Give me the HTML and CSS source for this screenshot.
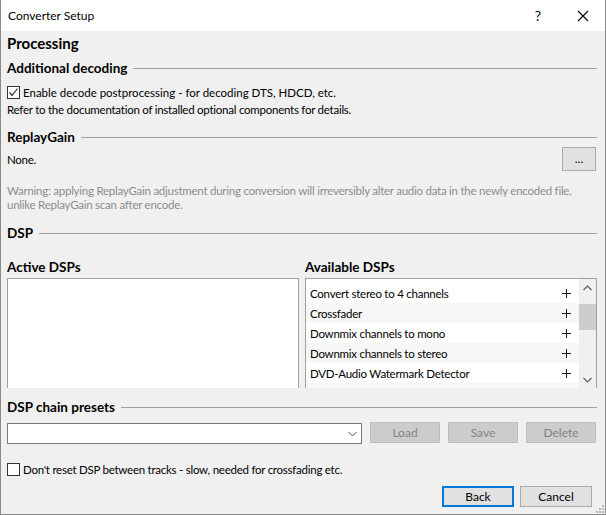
FILE: index.html
```html
<!DOCTYPE html>
<html>
<head>
<meta charset="utf-8">
<link rel="stylesheet" href="styles.css">
</head>
<body>
<div class="window">
  <div class="titlebar">
    <span class="title">Converter Setup</span>
    <span class="help">?</span>
    <span class="close"><svg width="12" height="12" viewBox="0 0 12 12"><path d="M1 1L11 11M11 1L1 11" stroke="#000" stroke-width="1.1" fill="none"/></svg></span>
  </div>
  <div class="content">
    <div class="page-title">Processing</div>
    <div class="group-head gh-decoding"><span>Additional decoding</span><i class="rule"></i></div>
    <label class="check check-decode"><span class="box"><svg width="11" height="11" viewBox="0 0 11 11"><path d="M1.5 5.5L4 8.5L9.5 1.5" stroke="#333" stroke-width="1.2" fill="none"/></svg></span><span>Enable decode postprocessing - for decoding DTS, HDCD, etc.</span></label>
    <div class="note">Refer to the documentation of installed optional components for details.</div>

    <div class="group-head gh-rg"><span>ReplayGain</span><i class="rule"></i></div>
    <div class="rg-row"><span>None.</span><button class="btn btn-dots">...</button></div>
    <div class="warning">Warning: applying ReplayGain adjustment during conversion will irreversibly alter audio data in the newly encoded file,<br>unlike ReplayGain scan after encode.</div>

    <div class="group-head gh-dsp"><span>DSP</span><i class="rule"></i></div>
    <div class="dsp-grid">
      <div class="col">
        <div class="col-label">Active DSPs</div>
        <div class="listbox"></div>
      </div>
      <div class="col">
        <div class="col-label">Available DSPs</div>
        <div class="listbox avail">
          <div class="rows">
            <div class="row"><span>Convert stereo to 4 channels</span><span class="plus"></span></div>
            <div class="row alt"><span>Crossfader</span><span class="plus"></span></div>
            <div class="row"><span>Downmix channels to mono</span><span class="plus"></span></div>
            <div class="row alt"><span>Downmix channels to stereo</span><span class="plus"></span></div>
            <div class="row"><span>DVD-Audio Watermark Detector</span><span class="plus"></span></div>
            <div class="row alt"><span>&nbsp;</span></div>
          </div>
          <div class="scrollbar">
            <svg class="arr" width="9" height="6" viewBox="0 0 9 6"><path d="M0.5 5L4.5 1L8.5 5" stroke="#606060" stroke-width="1.2" fill="none"/></svg>
            <div class="track"><div class="thumb"></div></div>
            <svg class="arr" width="9" height="6" viewBox="0 0 9 6"><path d="M0.5 1L4.5 5L8.5 1" stroke="#606060" stroke-width="1.2" fill="none"/></svg>
          </div>
        </div>
      </div>
    </div>

    <div class="group-head gh-presets"><span>DSP chain presets</span><i class="rule"></i></div>
    <div class="preset-row">
      <div class="combo"><svg width="9" height="6" viewBox="0 0 9 6"><path d="M0.5 1L4.5 5L8.5 1" stroke="#555" stroke-width="1" fill="none"/></svg></div>
      <button class="btn disabled">Load</button>
      <button class="btn disabled">Save</button>
      <button class="btn disabled">Delete</button>
    </div>
    <label class="check check-reset"><span class="box"></span><span>Don't reset DSP between tracks - slow, needed for crossfading etc.</span></label>
    <div class="footer">
      <button class="btn btn-main default">Back</button>
      <button class="btn btn-main">Cancel</button>
    </div>
  </div>
  <svg class="grip" width="8" height="8" viewBox="0 0 8 8"><g fill="#b8b8b8"><rect x="6" y="0" width="2" height="2"/><rect x="3" y="3" width="2" height="2"/><rect x="6" y="3" width="2" height="2"/><rect x="0" y="6" width="2" height="2"/><rect x="3" y="6" width="2" height="2"/><rect x="6" y="6" width="2" height="2"/></g></svg>
</div>
</body>
</html>
```
FILE: styles.css
```css
* { box-sizing: border-box; }
html, body { margin: 0; padding: 0; }
body {
  width: 606px;
  height: 515px;
  font-family: Lato, "Liberation Sans", sans-serif;
  font-size: 11.5px;
  letter-spacing: -0.25px;
  color: #000;
  background: #f0f0f0;
  overflow: hidden;
}
.window {
  position: relative;
  width: 606px;
  height: 515px;
  border: 1px solid #8a8a8a;
  border-top: none;
  background: #f0f0f0;
  display: flex;
  flex-direction: column;
}
.window > *, .content > * { flex-shrink: 0; }
.titlebar {
  height: 31px;
  background: #fff;
  display: flex;
  align-items: center;
  padding-left: 7px;
  letter-spacing: 0;
}
.title { flex: 1; font-size: 12px; }
.help { width: 20px; text-align: center; font-size: 14px; margin-right: 29px; }
.close { width: 12px; height: 12px; display: flex; margin-right: 16px; }

.content {
  padding: 0 8px 0 6px;
  display: flex;
  flex-direction: column;
}
.page-title {
  height: 24px;
  line-height: 24px;
  font-weight: bold;
  font-size: 15px;
  letter-spacing: 0;
}
.group-head {
  display: flex;
  align-items: center;
  font-weight: bold;
  font-size: 13.5px;
  letter-spacing: 0;
  height: 20px;
}
.group-head .rule {
  flex: 1;
  height: 1px;
  background: #a0a0a0;
  margin-left: 6px;
  margin-top: 1px;
}
.gh-decoding { height: 26px; }
.gh-rg { margin-top: 10px; }
.gh-dsp { margin-top: 11px; }
.gh-presets { margin-top: 9px; }

.check {
  display: flex;
  align-items: center;
  height: 22px;
}
.check-decode { letter-spacing: 0; }
.check .box {
  width: 13px;
  height: 13px;
  border: 1px solid #333;
  background: #fff;
  margin-right: 3px;
  display: flex;
  align-items: center;
  justify-content: center;
}
.note { height: 14px; line-height: 14px; }

.rg-row {
  height: 24px;
  display: flex;
  align-items: center;
  justify-content: space-between;
}
.btn {
  font-family: inherit;
  font-size: 12px;
  letter-spacing: 0;
  background: #e1e1e1;
  border: 1px solid #adadad;
  color: #000;
  padding: 0;
  margin: 0;
}
.btn-dots { width: 34px; height: 24px; margin-right: 1px; line-height: 18px; }
.warning {
  color: #8d8d8d;
  line-height: 14px;
  margin-top: 13px;
  white-space: nowrap;
}

.dsp-grid {
  margin-top: 14px;
  display: grid;
  grid-template-columns: 1fr 1fr;
  column-gap: 6px;
}
.col-label {
  font-weight: bold;
  font-size: 13.5px;
  letter-spacing: 0;
  height: 21px;
  line-height: 20px;
}
.listbox {
  height: 110px;
  background: #fff;
  border: 1px solid #a0a0a0;
  border-bottom: none;
  overflow: hidden;
}
.avail {
  display: flex;
}
.rows {
  flex: 1;
  padding-top: 4px;
}
.row {
  height: 20px;
  display: flex;
  align-items: center;
  justify-content: space-between;
  padding: 0 8px 0 4px;
}
.row.alt { background: #f7f7f7; }
.plus {
  position: relative;
  width: 9px;
  height: 9px;
}
.plus::before, .plus::after {
  content: "";
  position: absolute;
  background: #1a1a1a;
}
.plus::before { left: 4px; top: 0; width: 1px; height: 9px; }
.plus::after { left: 0; top: 4px; width: 9px; height: 1px; }
.scrollbar {
  width: 17px;
  background: #f0f0f0;
  display: flex;
  flex-direction: column;
  align-items: center;
}
.scrollbar .arr { margin: 6px 0 5px; flex: none; }
.track { flex: 1; width: 100%; padding-top: 8px; }
.thumb { width: 100%; height: 26px; background: #cdcdcd; }

.preset-row {
  margin-top: 5px;
  display: flex;
  align-items: flex-start;
  gap: 8px;
  padding-right: 1px;
}
.combo {
  flex: 1;
  height: 21px;
  margin-top: 1px;
  background: #fff;
  border: 1px solid #7a7a7a;
  display: flex;
  align-items: center;
  justify-content: flex-end;
  padding-right: 4px;
}
.btn.disabled {
  width: 70px;
  height: 21px;
  background: #cccccc;
  border-color: #bfbfbf;
  color: #838383;
}
.check-reset { margin-top: 15px; height: 20px; }
.footer {
  margin-top: 7px;
  display: flex;
  justify-content: flex-end;
  gap: 6px;
  padding-right: 5px;
}
.btn-main { width: 72px; height: 21px; }
.btn-main.default { border: 2px solid #0078d7; }
.grip { position: absolute; right: 1px; bottom: 1px; }
```
